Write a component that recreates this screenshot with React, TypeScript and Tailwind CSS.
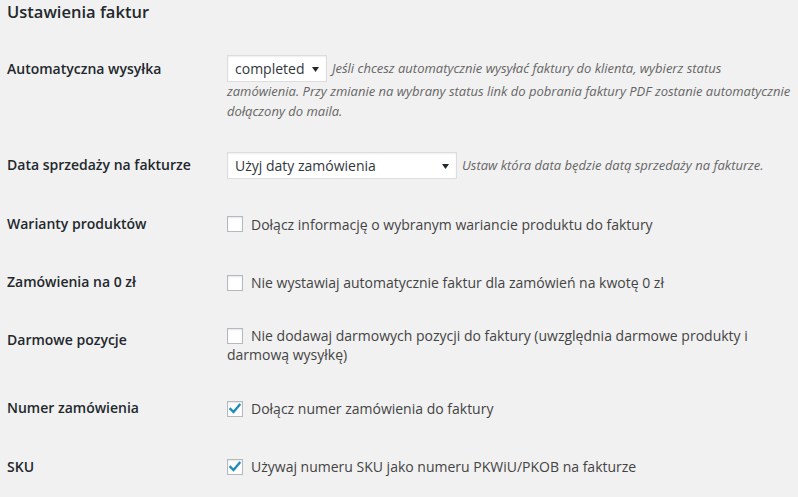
function Select({ value, width }: { value: string; width: string }) {
  return (
    <div
      className={`relative flex h-[27px] shrink-0 items-center border border-[#ddd] bg-white pl-[7px] text-sm text-[#32373c] not-italic shadow-[inset_0_1px_2px_rgba(0,0,0,0.07)] ${width}`}
    >
      {value}
      <svg className="absolute right-[7px] top-[11px]" width="7" height="5" viewBox="0 0 7 5">
        <polygon points="0,0 7,0 3.5,5" fill="#23282d" />
      </svg>
    </div>
  )
}

function Checkbox({ checked }: { checked?: boolean }) {
  return (
    <span className="mr-[8px] -mt-[3px] inline-flex h-4 w-4 items-center justify-center border border-[#b4b9be] bg-white align-middle shadow-[inset_0_1px_2px_rgba(0,0,0,0.1)]">
      {checked && (
        <svg width="14" height="14" viewBox="0 0 14 14">
          <polyline
            points="2.5,7 5.5,10 11.5,3"
            fill="none"
            stroke="#1e8cbe"
            strokeWidth="2.4"
            strokeLinecap="square"
          />
        </svg>
      )}
    </span>
  )
}

function Row({ label, children }: { label: string; children: React.ReactNode }) {
  return (
    <div className="flex">
      <div className="w-[210px] shrink-0 self-start py-5 pr-[10px] text-sm font-semibold leading-[18.2px] text-[#23282d]">
        {label}
      </div>
      <div className="min-w-0 flex-1 self-center whitespace-nowrap py-[15px] pl-[10px] text-sm leading-[19px] text-[#444]">
        {children}
      </div>
    </div>
  )
}

export default function App() {
  return (
    <div
      className="min-h-screen overflow-hidden bg-[#f1f1f1] pl-[7px]"
      style={{ fontFamily: '"Open Sans", "Noto Sans", sans-serif' }}
    >
      <div className="h-[40px] pt-[1px]">
        <h2 className="text-[16.5px] font-semibold leading-[22px] text-[#23282d]">Ustawienia faktur</h2>
      </div>

      <Row label="Automatyczna wysyłka">
        <div className="text-[13px] italic text-[#666]">
          <div className="flex h-[27px] items-center">
            <Select value="completed" width="w-[100px]" />
            <span className="ml-[5px] leading-[19.5px]">
              Jeśli chcesz automatycznie wysyłać faktury do klienta, wybierz status
            </span>
          </div>
          <div className="leading-[19.5px]">
            zamówienia. Przy zmianie na wybrany status link do pobrania faktury PDF zostanie automatycznie
            <br />
            dołączony do maila.
          </div>
        </div>
      </Row>

      <Row label="Data sprzedaży na fakturze">
        <div className="flex h-[29px] items-center text-[13px] italic text-[#666]">
          <Select value="Użyj daty zamówienia" width="w-[230px]" />
          <span className="ml-[5px]">Ustaw która data będzie datą sprzedaży na fakturze.</span>
        </div>
      </Row>

      <Row label="Warianty produktów">
        <p>
          <Checkbox />
          Dołącz informację o wybranym wariancie produktu do faktury
        </p>
      </Row>

      <Row label="Zamówienia na 0 zł">
        <p>
          <Checkbox />
          Nie wystawiaj automatycznie faktur dla zamówień na kwotę 0 zł
        </p>
      </Row>

      <Row label="Darmowe pozycje">
        <p className="leading-[19px]">
          <Checkbox />
          Nie dodawaj darmowych pozycji do faktury (uwzględnia darmowe produkty i
          <br />
          darmową wysyłkę)
        </p>
      </Row>

      <Row label="Numer zamówienia">
        <p>
          <Checkbox checked />
          Dołącz numer zamówienia do faktury
        </p>
      </Row>

      <Row label="SKU">
        <p>
          <Checkbox checked />
          Używaj numeru SKU jako numeru PKWiU/PKOB na fakturze
        </p>
      </Row>
    </div>
  )
}
